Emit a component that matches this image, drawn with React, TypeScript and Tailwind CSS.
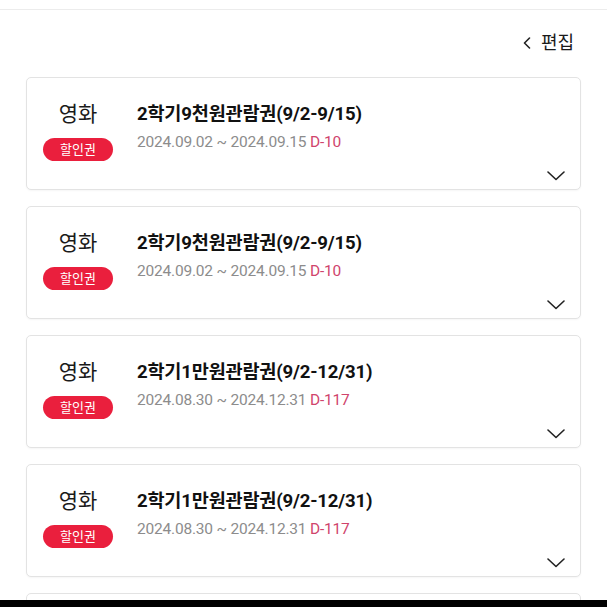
import React from "react";

const items = [
  { title: "2학기9천원관람권(9/2-9/15)", range: "2024.09.02 ~ 2024.09.15", d: "D-10" },
  { title: "2학기9천원관람권(9/2-9/15)", range: "2024.09.02 ~ 2024.09.15", d: "D-10" },
  { title: "2학기1만원관람권(9/2-12/31)", range: "2024.08.30 ~ 2024.12.31", d: "D-117" },
  { title: "2학기1만원관람권(9/2-12/31)", range: "2024.08.30 ~ 2024.12.31", d: "D-117" },
];

function Chevron() {
  return (
    <svg width="18" height="10" viewBox="0 0 18 10" fill="none">
      <path d="M1 1L9 8.5L17 1" stroke="#222" strokeWidth="1.6" strokeLinecap="round" strokeLinejoin="round" />
    </svg>
  );
}

function Card({ title, range, d }: { title: string; range: string; d: string }) {
  return (
    <div className="h-[113px] shrink-0 rounded-[5px] border border-[#e3e3e3] bg-white shadow-[0_1px_2px_rgba(0,0,0,0.04)] flex flex-col">
      <div className="flex pt-[22px]">
        <div className="w-[102px] flex flex-col items-center">
          <div className="text-[21px] leading-[28px] text-[#1a1a1a]">영화</div>
          <div className="mt-[10px] w-[70px] h-[23px] rounded-full bg-[#ea1f3d] flex items-center justify-center text-white text-[13px] leading-none">
            할인권
          </div>
        </div>
        <div className="ml-[8px] flex flex-col">
          <div className="text-[18.6px] leading-[28px] font-bold text-[#111] tracking-[-0.2px]">{title}</div>
          <div className="mt-[4px] text-[15.5px] leading-[20px] text-[#8c8c8c] tracking-[-0.2px]">
            {range} <span className="text-[#d0446c]">{d}</span>
          </div>
        </div>
      </div>
      <div className="flex justify-end pr-[15px] mt-[10px]">
        <Chevron />
      </div>
    </div>
  );
}

export default function App() {
  return (
    <div
      className="w-[607px] h-[607px] bg-white flex flex-col overflow-hidden"
      style={{ fontFamily: 'Roboto, "Noto Sans CJK KR", sans-serif' }}
    >
      <div className="h-[10px] shrink-0 border-b border-[#ececec]" />
      <div className="flex-1 overflow-hidden flex flex-col">
        <div className="h-[67px] shrink-0 flex items-center justify-end pr-[33px] pb-[1px]">
          <div className="flex items-center gap-[10px] text-[#1a1a1a]">
            <svg width="8" height="12" viewBox="0 0 8 12" fill="none">
              <path d="M6.5 1L1.5 6L6.5 11" stroke="#222" strokeWidth="1.6" strokeLinecap="round" strokeLinejoin="round" />
            </svg>
            <span className="text-[18px] leading-none">편집</span>
          </div>
        </div>
        <div className="flex flex-col gap-[16px] px-[26px]">
          {items.map((it, i) => (
            <Card key={i} {...it} />
          ))}
          <div className="h-[113px] shrink-0 rounded-[5px] border border-[#e3e3e3] bg-white" />
        </div>
      </div>
      <div className="h-[7px] shrink-0 bg-black" />
    </div>
  );
}
